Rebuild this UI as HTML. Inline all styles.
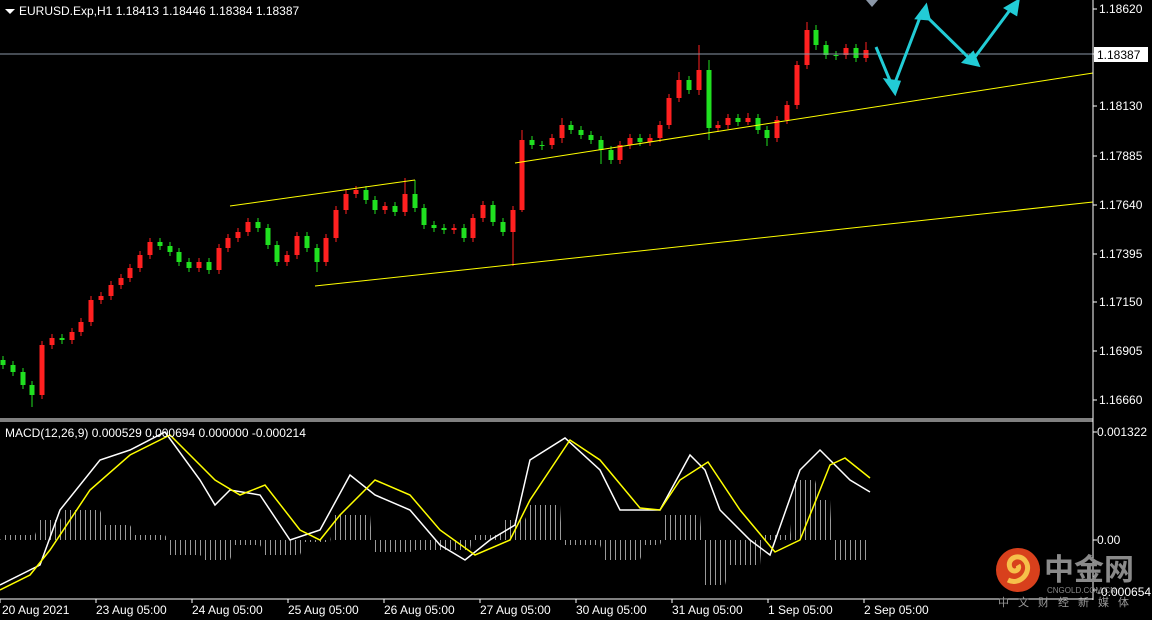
<!DOCTYPE html>
<html><head><meta charset="utf-8"><style>
html,body{margin:0;padding:0;background:#000;width:1152px;height:620px;overflow:hidden}
svg{display:block}
text{font-family:"Liberation Sans",sans-serif;font-size:12px;fill:#fff}
</style></head><body>
<svg width="1152" height="620" xmlns="http://www.w3.org/2000/svg">
<defs>
<pattern id="hp" width="5" height="10" patternUnits="userSpaceOnUse"><rect x="0" y="0" width="1" height="10" fill="#9a9a9a"/></pattern>
</defs>
<rect width="1152" height="620" fill="#000"/>
<polygon fill="url(#hp)" points="0,540 5,535 35,535 40,520 60,520 65,510 100,510 105,525 130,525 135,535 165,535 168,540 170,555 200,555 205,560 230,560 235,545 260,545 265,555 300,555 305,542 330,542 335,515 370,515 372,540 375,552 410,552 415,550 470,550 472,540 475,535 500,535 505,520 525,520 530,505 560,505 562,540 565,545 600,545 605,560 640,560 645,545 660,545 662,540 665,515 700,515 702,540 705,585 725,585 730,565 760,565 762,540 765,535 790,535 795,480 815,480 820,500 830,500 832,540 835,560 870,560 870,540"/>
<!-- red candles -->
<path fill="none" stroke="#ff2020" stroke-width="1" d="M42 341v58M52 334v15M72 328v16M81 318v18M91 296v30M101 292v12M111 281v19M121 274v15M130 264v18M140 251v21M150 238v21M199 258v14M219 244v30M228 234v18M238 228v14M248 218v18M287 251v15M297 232v27M326 234v32M336 206v36M346 190v24M356 186v12M385 202v12M405 178v38M454 224v10M473 214v28M483 201v21M513 206v60M522 130v82M552 134v15M562 118v25M620 141v23M630 134v15M650 134v12M660 121v21M669 94v35M679 72v30M699 45v50M718 121v11M728 114v15M748 113v12M777 116v26M787 101v23M797 61v48M807 22v47M846 44v15M866 42v20"/>
<path fill="none" stroke="#ff2020" stroke-width="5" d="M42 345v50M52 338v7M72 332v8M81 322v10M91 300v22M101 296v4M111 285v11M121 278v7M130 268v10M140 255v13M150 242v13M199 262v6M219 248v22M228 238v10M238 232v6M248 222v10M287 255v7M297 236v19M326 238v24M336 210v28M346 194v16M356 190v4M385 206v4M405 194v18M454 228v2M473 218v20M483 205v13M513 210v22M522 140v70M552 138v7M562 125v13M620 145v15M630 138v7M650 138v4M660 125v13M669 98v27M679 80v18M699 70v20M718 125v3M728 118v7M748 118v4M777 120v18M787 105v15M797 65v40M807 30v35M846 48v7M866 50v8"/>
<!-- green candles -->
<path fill="none" stroke="#20e020" stroke-width="1" d="M3 356v13M13 361v15M23 368v21M32 381v26M62 334v10M160 238v12M170 242v14M179 248v18M189 258v14M209 258v16M258 218v14M268 224v25M277 241v25M307 232v20M317 244v28M366 186v18M375 196v18M395 202v14M415 180v32M424 204v25M434 221v11M444 224v10M464 224v18M493 201v25M503 218v18M532 136v13M542 141v9M571 121v13M581 126v13M591 131v13M601 136v28M611 146v18M640 134v12M689 76v18M709 60v80M738 114v12M758 114v20M767 126v20M816 25v25M826 41v18M836 51v9M856 44v18"/>
<path fill="none" stroke="#20e020" stroke-width="5" d="M3 360v5M13 365v7M23 372v13M32 385v10M62 338v2M160 242v4M170 246v6M179 252v10M189 262v6M209 262v8M258 222v6M268 228v17M277 245v17M307 236v12M317 248v14M366 190v10M375 200v10M395 206v6M415 194v14M424 208v17M434 225v3M444 228v2M464 228v10M493 205v17M503 222v10M532 140v5M542 145v1M571 125v5M581 130v5M591 135v5M601 140v10M611 150v10M640 138v4M689 80v10M709 70v58M738 118v4M758 118v12M767 130v8M816 30v15M826 45v10M836 55v1M856 48v10"/>
<line x1="0" y1="54" x2="1093" y2="54" stroke="#8a96a6" stroke-width="1"/>
<line x1="230" y1="206" x2="415" y2="180" stroke="#ffff00" stroke-width="1"/>
<line x1="315" y1="286" x2="1093" y2="202" stroke="#ffff00" stroke-width="1"/>
<line x1="515" y1="163" x2="1093" y2="73" stroke="#ffff00" stroke-width="1"/>
<polyline fill="none" stroke="#fff" stroke-width="1.5" points="0,585 40,565 60,510 100,460 130,450 165,432 200,480 215,505 230,490 260,495 290,540 320,530 350,475 375,495 410,510 440,545 465,560 490,540 515,525 530,460 565,438 600,470 620,510 660,510 690,455 705,470 720,510 750,540 770,555 800,470 820,450 850,480 870,492"/>
<polyline fill="none" stroke="#ffff00" stroke-width="1.5" points="0,590 30,575 50,550 90,490 130,455 170,435 215,480 240,495 265,485 300,530 320,540 340,515 375,480 410,495 440,530 475,555 510,540 530,500 570,440 600,460 640,508 660,510 680,480 708,462 740,510 775,552 800,540 830,465 845,458 870,478"/>
<g stroke="#22ccd6" stroke-width="3" fill="#22ccd6">
<polyline points="876,47 893,88 922,12 972,61 1013,6" fill="none"/>
<polygon points="895,93 886,80 899,82"/>
<polygon points="926,6 917,18 929,19"/>
<polygon points="978,65 964,62 973,53"/>
<polygon points="1018,1 1006,8 1016,14"/>
</g>
<polygon points="866,0 878,0 872,7" fill="#8a96a6"/>
<line x1="1093" y1="0" x2="1093" y2="600" stroke="#fff"/>
<line x1="0" y1="419" x2="1093" y2="419" stroke="#fff"/>
<line x1="0" y1="421" x2="1093" y2="421" stroke="#fff"/>
<line x1="0" y1="599" x2="1093" y2="599" stroke="#fff"/>
<path stroke="#fff" d="M1093 9H1097M1093 54H1097M1093 106H1097M1093 156H1097M1093 205H1097M1093 254H1097M1093 302H1097M1093 351H1097M1093 400H1097M1093 432H1097M1093 540H1097M1093 590H1097M0 599V603M96 599V603M192 599V603M288 599V603M384 599V603M480 599V603M576 599V603M672 599V603M768 599V603M864 599V603"/>
<polygon points="5,9 15,9 10,14" fill="#fff"/>
<text x="19" y="15">EURUSD.Exp,H1  1.18413 1.18446 1.18384 1.18387</text>
<text x="5" y="437">MACD(12,26,9) 0.000529 0.000694 0.000000 -0.000214</text>
<text x="1099" y="13">1.18620</text>
<rect x="1094" y="47" width="54" height="15" fill="#fff"/>
<text x="1097" y="59" style="fill:#000">1.18387</text>
<text x="1099" y="110">1.18130</text>
<text x="1099" y="160">1.17885</text>
<text x="1099" y="209">1.17640</text>
<text x="1099" y="258">1.17395</text>
<text x="1099" y="306">1.17150</text>
<text x="1099" y="355">1.16905</text>
<text x="1099" y="404">1.16660</text>
<text x="1097" y="436">0.001322</text>
<text x="1097" y="544">0.00</text>
<text x="1097" y="596">-0.000654</text>
<text x="2" y="614">20 Aug 2021</text>
<text x="96" y="614">23 Aug 05:00</text>
<text x="192" y="614">24 Aug 05:00</text>
<text x="288" y="614">25 Aug 05:00</text>
<text x="384" y="614">26 Aug 05:00</text>
<text x="480" y="614">27 Aug 05:00</text>
<text x="576" y="614">30 Aug 05:00</text>
<text x="672" y="614">31 Aug 05:00</text>
<text x="768" y="614">1 Sep 05:00</text>
<text x="864" y="614">2 Sep 05:00</text>
<circle cx="1018" cy="570" r="22" fill="#d8401c"/>
<path d="M1008,580 C1020,586 1032,572 1026,562 C1020,552 1006,558 1010,568 C1013,574 1021,570 1018,565" fill="none" stroke="#f6c04a" stroke-width="5"/>
<text x="1044" y="580" style="font-family:'Noto Sans CJK SC',sans-serif;font-size:30px;font-weight:bold;fill:#8a8a8a">中金网</text>
<text x="1047" y="593" style="font-size:8px;fill:#888">CNGOLD.COM.CN</text>
<text x="998" y="606" style="font-family:'Noto Sans CJK SC',sans-serif;font-size:11px;fill:#999;letter-spacing:9px">中文财经新媒体</text>
</svg>
</body></html>
